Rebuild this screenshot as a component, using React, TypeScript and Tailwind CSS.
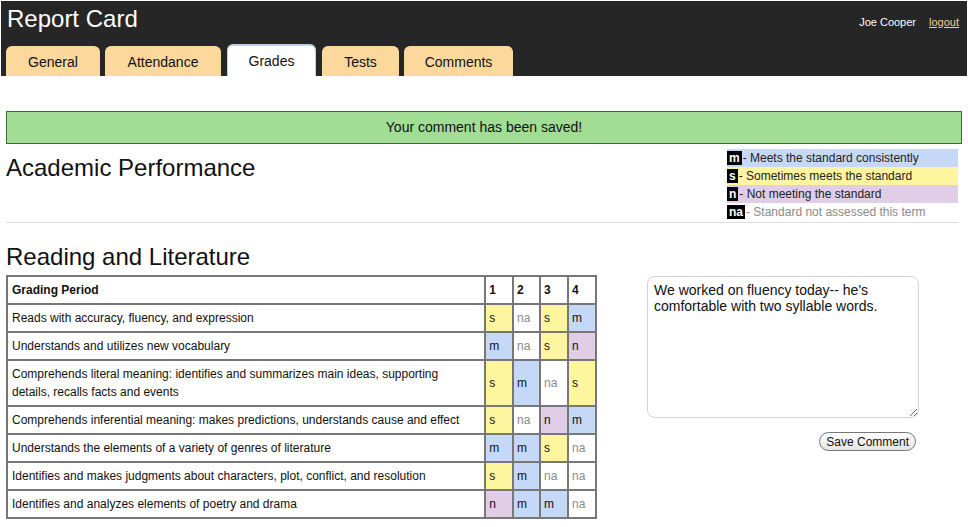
import React from "react";

type G = "s" | "m" | "n" | "na";
const rows: { t: string; g: G[]; tall?: boolean }[] = [
  { t: "Reads with accuracy, fluency, and expression", g: ["s", "na", "s", "m"] },
  { t: "Understands and utilizes new vocabulary", g: ["m", "na", "s", "n"] },
  {
    t: "Comprehends literal meaning: identifies and summarizes main ideas, supporting details, recalls facts and events",
    g: ["s", "m", "na", "s"],
    tall: true,
  },
  { t: "Comprehends inferential meaning: makes predictions, understands cause and effect", g: ["s", "na", "n", "m"] },
  { t: "Understands the elements of a variety of genres of literature", g: ["m", "m", "s", "na"] },
  { t: "Identifies and makes judgments about characters, plot, conflict, and resolution", g: ["s", "m", "na", "na"] },
  { t: "Identifies and analyzes elements of poetry and drama", g: ["n", "m", "m", "na"] },
];

const cellCls: Record<G, string> = {
  s: "bg-[#fff59f] text-[#111]",
  m: "bg-[#c6d8f8] text-[#111]",
  n: "bg-[#e2cde6] text-[#111]",
  na: "bg-white text-[#8a8a8a]",
};

const tabs = [
  { l: "General", w: "w-[94px]" },
  { l: "Attendance", w: "w-[116px]" },
  { l: "Grades", w: "w-[89px]", active: true },
  { l: "Tests", w: "w-[77px]" },
  { l: "Comments", w: "w-[109px]" },
];

export default function App() {
  return (
    <div className="w-[968px] h-[527px] bg-white overflow-hidden font-['Liberation_Sans',Arial,sans-serif] text-[#111]">
      {/* header */}
      <div className="mx-[1px] mt-[1px] h-[75px] bg-[#262626] flex flex-col relative">
        <div className="flex items-start justify-between">
          <div className="text-white text-[24px] leading-[28px] pl-[6px] pt-[4px]">Report Card</div>
          <div className="flex items-center gap-[13px] pt-[13px] pr-[8px] text-[11px]">
            <span className="text-white">Joe Cooper</span>
            <a className="text-[#f9cf8a] underline">logout</a>
          </div>
        </div>
        <div className="flex items-end gap-[5px] pl-[5px] mt-auto">
          {tabs.map((t) =>
            t.active ? (
              <div
                key={t.l}
                className={`${t.w} h-[32px] bg-white rounded-t-[6px] border-t-2 border-x border-[#bcd0ee] border-b-0 flex items-center justify-center text-[14px] text-[#111] pt-[1px] ml-[1px] mr-[1px]`}
              >
                {t.l}
              </div>
            ) : (
              <div
                key={t.l}
                className={`${t.w} h-[30px] bg-[#fcd89d] rounded-t-[6px] flex items-center justify-center text-[14px] text-[#111] pt-[3px]`}
              >
                {t.l}
              </div>
            )
          )}
        </div>
      </div>

      {/* saved message */}
      <div className="mx-[6px] mt-[35px] h-[33px] bg-[#a2dd96] border border-[#3e6a37] flex items-center justify-center text-[14px] text-[#111]">
        Your comment has been saved!
      </div>

      {/* academic performance */}
      <div className="ml-[6px] mr-[10px] mt-[5px] flex justify-between border-b border-[#dddddd] pb-[1px]">
        <div className="text-[24px] leading-[28px] pt-[5px]">Academic Performance</div>
        <div className="w-[231px] text-[12px] leading-[18px]">
          <div className="bg-[#c6d8f8] flex items-center h-[18px]">
            <span className="bg-black text-white font-bold px-[2px] leading-[14px] h-[14px] mr-[1px]">m</span>
            <span className="text-[#222]">- Meets the standard consistently</span>
          </div>
          <div className="bg-[#fff59f] flex items-center h-[18px]">
            <span className="bg-black text-white font-bold px-[2px] leading-[14px] h-[14px] mr-[1px]">s</span>
            <span className="text-[#222]">- Sometimes meets the standard</span>
          </div>
          <div className="bg-[#e2cde6] flex items-center h-[18px]">
            <span className="bg-black text-white font-bold px-[2px] leading-[14px] h-[14px] mr-[1px]">n</span>
            <span className="text-[#222]">- Not meeting the standard</span>
          </div>
          <div className="bg-white flex items-center h-[18px]">
            <span className="bg-black text-white font-bold px-[2px] leading-[14px] h-[14px] mr-[1px]">na</span>
            <span className="text-[#8a8a8a]">- Standard not assessed this term</span>
          </div>
        </div>
      </div>

      {/* reading and literature */}
      <div className="mx-[6px] mt-[20px] text-[24px] leading-[28px]">Reading and Literature</div>
      <div className="mx-[6px] mt-[4px] flex items-start">
        <table className="w-[591px] border-collapse border-2 border-[#777] text-[12px] leading-[18px]">
          <colgroup>
            <col className="w-[480px]" />
            <col className="w-[28px]" />
            <col className="w-[27px]" />
            <col className="w-[28px]" />
            <col className="w-[28px]" />
          </colgroup>
          <thead>
            <tr className="h-[28px]">
              <th className="border-2 border-[#777] text-left font-bold px-[4px]">Grading Period</th>
              {[1, 2, 3, 4].map((n) => (
                <th key={n} className="border-2 border-[#777] text-left font-bold px-[3px]">
                  {n}
                </th>
              ))}
            </tr>
          </thead>
          <tbody>
            {rows.map((r, i) => (
              <tr key={i} className={r.tall ? "h-[46px]" : "h-[28px]"}>
                <td className="border-2 border-[#777] pl-[4px] pr-[8px] py-[1px]">{r.t}</td>
                {r.g.map((g, j) => (
                  <td key={j} className={`border-2 border-[#777] px-[3px] ${cellCls[g]}`}>
                    {g}
                  </td>
                ))}
              </tr>
            ))}
          </tbody>
        </table>

        <div className="ml-[50px] mt-[1px] flex flex-col items-end">
          <textarea
            className="w-[272px] h-[142px] rounded-[8px] border border-[#d2d2d8] px-[6px] py-[5px] text-[14px] leading-[16px] text-[#111] resize-y outline-none"
            defaultValue="We worked on fluency today-- he's comfortable with two syllable words."
          />
          <button className="mt-[14px] mr-[3px] h-[19px] px-[6px] rounded-full border border-[#777] bg-gradient-to-b from-white to-[#e4e4e4] text-[12px] leading-[16px] text-[#111]">
            Save Comment
          </button>
        </div>
      </div>
    </div>
  );
}
